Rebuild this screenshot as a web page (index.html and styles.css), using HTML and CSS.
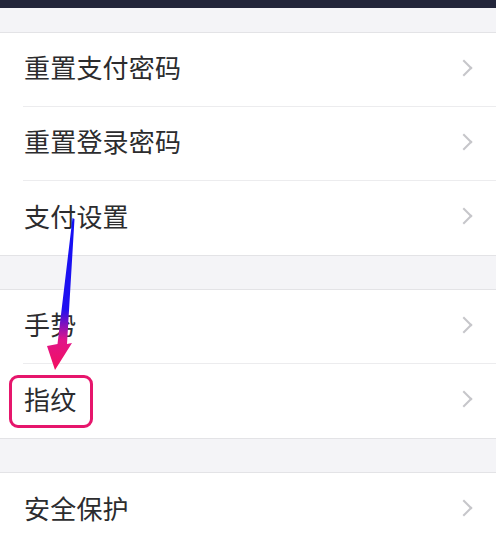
FILE: index.html
```html
<!DOCTYPE html>
<html lang="zh-CN">
  <head>
    <meta charset="UTF-8" />
    <meta name="viewport" content="width=device-width, initial-scale=1.0" />
    <title>支付设置</title>
    <link rel="stylesheet" href="styles.css">
  </head>
  <body>
    <!-- status bar strip -->
    <div class="top-bar"></div>

    <div class="page">
      <!-- password group -->
      <div class="group">
        <div class="row"><span class="row-title">重置支付密码</span><span class="chevron"></span></div>
        <div class="row"><span class="row-title">重置登录密码</span><span class="chevron"></span></div>
        <div class="row"><span class="row-title">支付设置</span><span class="chevron"></span></div>
      </div>

      <!-- unlock group -->
      <div class="group">
        <div class="row"><span class="row-title">手势</span><span class="chevron"></span></div>
        <div class="row"><span class="row-title">指纹</span><span class="chevron"></span></div>
      </div>

      <!-- protection group (runs to the bottom edge) -->
      <div class="group group-open">
        <div class="row"><span class="row-title">安全保护</span><span class="chevron"></span></div>
      </div>
    </div>

    <!-- annotation: arrow + highlight box -->
    <svg class="arrow" width="496" height="548" viewBox="0 0 496 548">
      <defs>
        <linearGradient id="arrowFill" x1="0" y1="218" x2="0" y2="370" gradientUnits="userSpaceOnUse">
          <stop offset="0" stop-color="#1410f4" />
          <stop offset="0.6" stop-color="#2010f0" />
          <stop offset="0.8" stop-color="#e0148a" />
          <stop offset="1" stop-color="#f4105e" />
        </linearGradient>
      </defs>
      <polygon points="72.5,218 74.5,219 67,344 72,343 55,370 47,346 57.5,344" fill="url(#arrowFill)" />
    </svg>
    <div class="highlight"></div>
  </body>
</html>
```

FILE: styles.css
```css
* {
  margin: 0;
  padding: 0;
  box-sizing: border-box;
}
body {
  font-family: "Noto Sans CJK SC", "Noto Sans", sans-serif;
  background-color: #f4f4f7;
  width: 496px;
  height: 548px;
  overflow: hidden;
  position: relative;
}

.top-bar {
  height: 8px;
  background-color: #22253a;
}

.page {
  display: flex;
  flex-direction: column;
  gap: 33px;
  padding-top: 24px;
}

.group {
  background-color: #fff;
  border-top: 1px solid #e3e3e6;
  border-bottom: 1px solid #e3e3e6;
}
.group-open {
  border-bottom: none;
  padding-bottom: 1px;
}

.row {
  height: 74px;
  margin-left: 23px;
  padding-right: 22px;
  padding-bottom: 4px;
  display: flex;
  align-items: center;
  justify-content: space-between;
  border-bottom: 1px solid #ececee;
}
.row:last-child {
  border-bottom: none;
}

.row-title {
  padding-left: 1px;
  padding-bottom: 2px;
  font-size: 26px;
  color: #2c2c2e;
  letter-spacing: 0.2px;
}

/* right pointing chevron */
.chevron {
  width: 12px;
  height: 12px;
  border-top: 2px solid #c6c6ca;
  border-right: 2px solid #c6c6ca;
  transform: rotate(45deg);
  margin-right: 4px;
}

.arrow {
  position: absolute;
  top: 0;
  left: 0;
  pointer-events: none;
}

.highlight {
  position: absolute;
  left: 9px;
  top: 375px;
  width: 84px;
  height: 53px;
  border: 3px solid #e6166c;
  border-radius: 9px;
}
```
